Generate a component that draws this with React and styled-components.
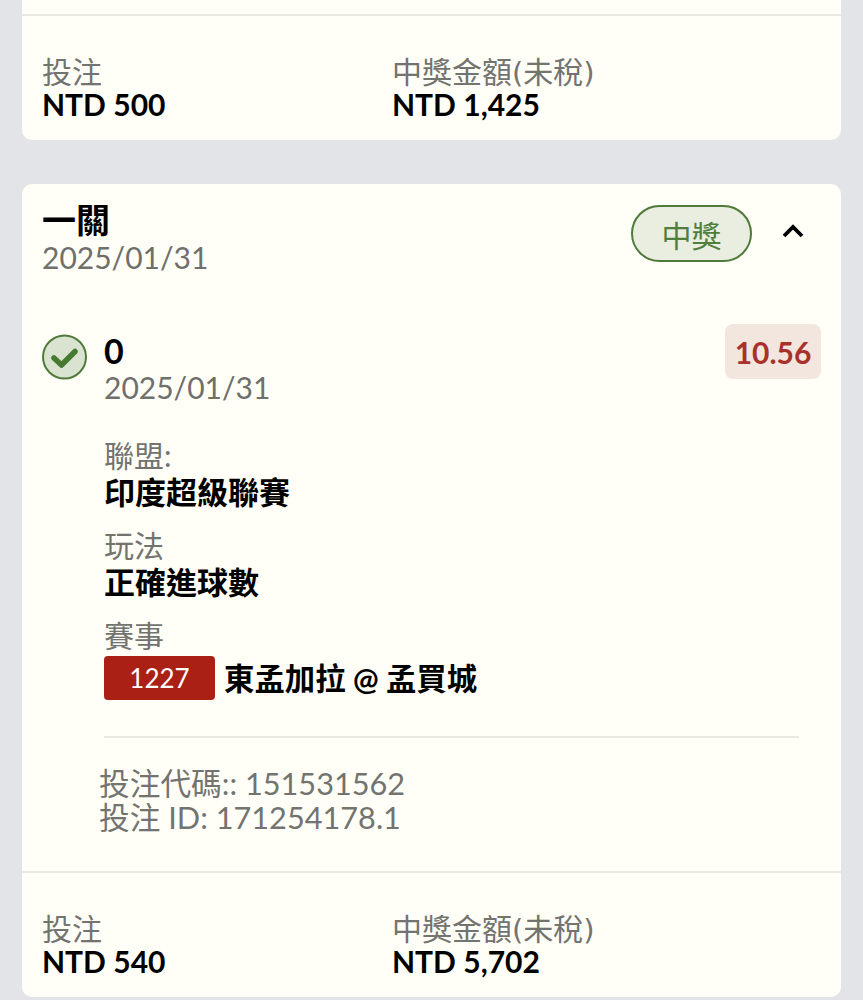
import styled, { createGlobalStyle } from "styled-components";

const GlobalStyle = createGlobalStyle`
  html, body {
    margin: 0;
    padding: 0;
    background: #e2e4e7;
  }
  body {
    font-family: Lato, "Noto Sans CJK TC", sans-serif;
  }
`;

const Page = styled.div`
  height: 1000px;
  overflow: hidden;
  padding: 0 22px;
  box-sizing: border-box;
  display: flex;
  flex-direction: column;
  gap: 44px;
`;

const Card = styled.section`
  background: #fffff8;
  border-radius: ${(p) => (p.$cut ? "0 0 10px 10px" : "10px")};
  padding-top: ${(p) => (p.$cut ? "14px" : "0")};
`;

const Header = styled.div`
  display: flex;
  justify-content: space-between;
  padding: 18px 20px 0 20px;
  height: 92px;
  box-sizing: border-box;
`;

const Title = styled.div`
  font-size: 34px;
  line-height: 35px;
  font-weight: 700;
  color: #000;
  margin-bottom: 2px;
`;

const DateText = styled.div`
  font-size: 30px;
  line-height: 36px;
  color: #6f6f6b;
`;

const HeaderActions = styled.div`
  display: flex;
  align-items: flex-start;
  gap: 29px;
  padding-top: 3px;
`;

const StatusPill = styled.div`
  width: 121px;
  height: 57px;
  box-sizing: border-box;
  border: 2px solid #4f7a3a;
  border-radius: 29px;
  background: #e9eee0;
  color: #4f7f3c;
  font-size: 30px;
  display: flex;
  align-items: center;
  justify-content: center;
`;

const ToggleIcon = styled.svg`
  width: 24px;
  height: 16px;
  margin: 18px 16px 0 0;
`;

const Leg = styled.div`
  display: flex;
  padding: 48px 20px 0 20px;
`;

const CheckIcon = styled.svg`
  width: 46px;
  height: 46px;
  flex: none;
  margin: 10px 16px 0 0;
`;

const LegBody = styled.div`
  flex: 1;
`;

const LegTop = styled.div`
  display: flex;
  justify-content: space-between;
  align-items: flex-start;
`;

const LegName = styled.div`
  font-size: 34px;
  line-height: 37px;
  font-weight: 700;
  color: #000;
  margin-top: 8px;
`;

const Odds = styled.div`
  background: #f3e6df;
  color: #a8322a;
  font-size: 30px;
  font-weight: 700;
  border-radius: 8px;
  width: 96px;
  height: 55px;
  display: flex;
  align-items: center;
  justify-content: center;
`;

const Field = styled.div`
  margin-top: ${(p) => p.$top || 16}px;
`;

const FieldLabel = styled.div`
  font-size: 30px;
  line-height: 36px;
  color: #73736f;
`;

const FieldValue = styled.div`
  font-size: 31px;
  line-height: 38px;
  font-weight: 700;
  color: #000;
`;

const EventRow = styled(FieldValue)`
  font-size: 30.4px;
  display: flex;
  align-items: center;
  gap: 9px;
  margin-top: 3px;
`;

const EventCode = styled.span`
  width: 111px;
  height: 44px;
  background: #ab2015;
  color: #fff;
  border-radius: 4px;
  font-size: 26px;
  font-weight: 400;
  display: flex;
  align-items: center;
  justify-content: center;
`;

const InnerRule = styled.hr`
  border: 0;
  height: 2px;
  background: #e9e9e3;
  margin: 36px 22px 0 0;
`;

const Meta = styled.div`
  margin: 29px 0 36px -5px;
  font-size: 30.7px;
  line-height: 34px;
  color: #73736f;
`;

const Rule = styled.hr`
  border: 0;
  height: 2px;
  background: #e9e9e3;
  margin: 0;
`;

const Footer = styled.div`
  display: grid;
  grid-template-columns: 350px 1fr;
  padding: 38px 20px 20px;
`;

const FooterLabel = styled.div`
  font-size: 30px;
  line-height: 34px;
  color: #73736f;
`;

const Paren = styled.span`
  font-family: "DejaVu Sans", sans-serif;
  font-size: 29px;
  line-height: 0;
`;

const FooterValue = styled.div`
  font-size: 30px;
  line-height: 32px;
  font-weight: 700;
  color: #000;
`;

const Totals = ({ stake, payout }) => (
  <Footer>
    <div>
      <FooterLabel>投注</FooterLabel>
      <FooterValue>NTD {stake}</FooterValue>
    </div>
    <div>
      <FooterLabel>
        中獎金額<Paren>(</Paren>未稅<Paren>)</Paren>
      </FooterLabel>
      <FooterValue>NTD {payout}</FooterValue>
    </div>
  </Footer>
);

const App = () => {
  return (
    <>
      <GlobalStyle />
      <Page>
        <Card $cut>
          <Rule />
          <Totals stake="500" payout="1,425" />
        </Card>
        <Card>
          <Header>
            <div>
              <Title>一關</Title>
              <DateText>2025/01/31</DateText>
            </div>
            <HeaderActions>
              <StatusPill>中獎</StatusPill>
              <ToggleIcon viewBox="0 0 24 16">
                <path
                  d="M3 13 L12 4 L21 13"
                  fill="none"
                  stroke="#000"
                  strokeWidth="3.8"
                />
              </ToggleIcon>
            </HeaderActions>
          </Header>
          <Leg>
            <CheckIcon viewBox="0 0 46 46">
              <circle
                cx="22.5"
                cy="23"
                r="21.5"
                fill="#d9e3cf"
                stroke="#4f7a3a"
                strokeWidth="2"
              />
              <path
                d="M12 24 L19.5 31 L33 17.5"
                fill="none"
                stroke="#457a30"
                strokeWidth="5.5"
                strokeLinecap="round"
                strokeLinejoin="round"
              />
            </CheckIcon>
            <LegBody>
              <LegTop>
                <div>
                  <LegName>0</LegName>
                  <DateText>2025/01/31</DateText>
                </div>
                <Odds>10.56</Odds>
              </LegTop>
              <Field $top={32}>
                <FieldLabel>聯盟:</FieldLabel>
                <FieldValue>印度超級聯賽</FieldValue>
              </Field>
              <Field>
                <FieldLabel>玩法</FieldLabel>
                <FieldValue>正確進球數</FieldValue>
              </Field>
              <Field>
                <FieldLabel>賽事</FieldLabel>
                <EventRow>
                  <EventCode>1227</EventCode>
                  東孟加拉 @ 孟買城
                </EventRow>
              </Field>
              <InnerRule />
              <Meta>
                <div>投注代碼:: 151531562</div>
                <div>投注 ID: 171254178.1</div>
              </Meta>
            </LegBody>
          </Leg>
          <Rule />
          <Totals stake="540" payout="5,702" />
        </Card>
      </Page>
    </>
  );
};

export default App;
